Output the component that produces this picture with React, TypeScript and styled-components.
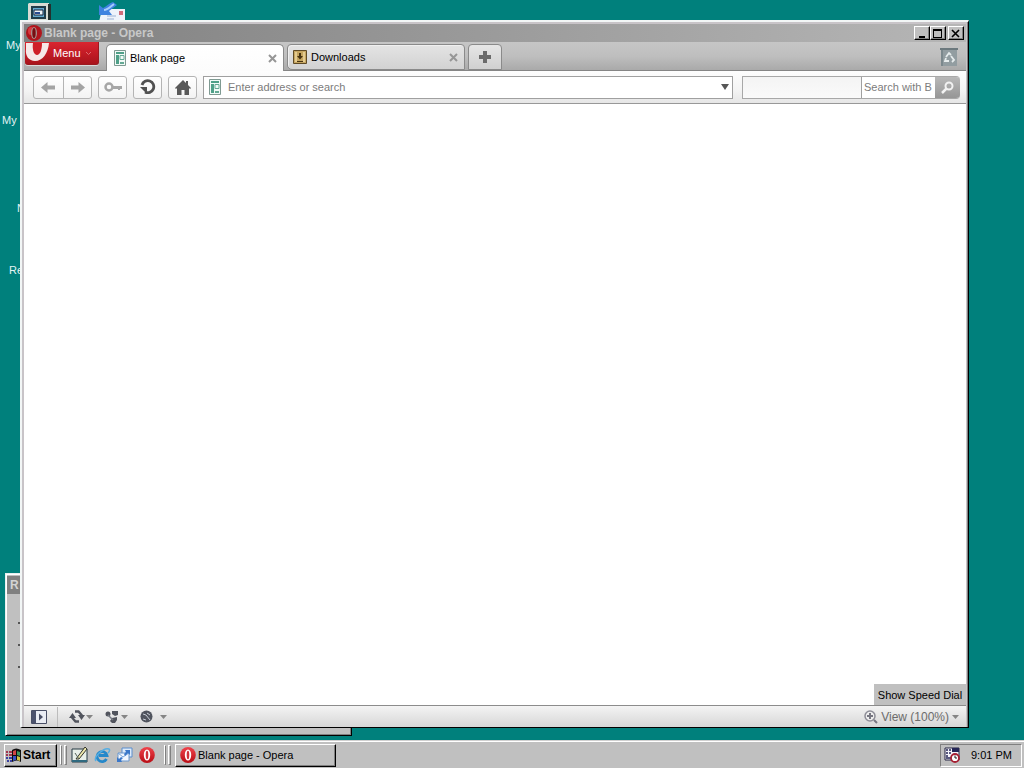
import React from "react";
import styled, { createGlobalStyle, css } from "styled-components";

const GlobalStyle = createGlobalStyle`
  *, *::before, *::after { box-sizing: border-box; }
  body { margin: 0; }
  body, button, input { font-family: "Liberation Sans", Arial, sans-serif; font-size: 11px; line-height: 14px; }
  button { padding: 0; margin: 0; color: #000; }
  svg { display: block; flex: none; }
`;

const raised = css`
  background: #c0c0c0;
  border: 1px solid;
  border-color: #fff #000 #000 #fff;
  box-shadow: inset -1px -1px 0 #808080;
`;

const Screen = styled.div`
  height: 100vh;
  min-height: 400px;
  display: flex;
  flex-direction: column;
  background: #00807c;
  overflow: hidden;
`;

const Desktop = styled.main`
  position: relative;
  flex: 1;
  min-height: 0;
`;

const DesktopItem = styled.div<{ $x: number; $y: number }>`
  position: absolute;
  left: ${(p) => p.$x}px;
  top: ${(p) => p.$y}px;
  color: #e4f4f4;
  white-space: nowrap;
`;

const BackWindow = styled.section`
  position: absolute;
  left: 5px;
  bottom: 4px;
  width: 347px;
  height: 163px;
  padding: 2px 1px;
  background: #c0c0c0;
  border: 1px solid;
  border-color: #e8f0f0 #000 #000 #e8f0f0;
  box-shadow: inset 1px 1px 0 #fff, inset -1px -1px 0 #808080;
`;

const BackTitle = styled.div`
  height: 18px;
  padding: 2px 3px;
  background: #808080;
  color: #d4d4d4;
  font-size: 12px;
  font-weight: bold;
`;

const BackList = styled.div`
  display: flex;
  flex-direction: column;
  gap: 20px;
  padding: 28px 0 0 11px;
`;

const Speck = styled.span`
  width: 3px;
  height: 2px;
  background: #555;
`;

const BrowserWindow = styled.section`
  position: absolute;
  left: 20px;
  right: 55px;
  top: 20px;
  bottom: 12px;
  display: flex;
  flex-direction: column;
  background: #c8c4c8;
  border: solid;
  border-width: 2px 1px 1px 2px;
  border-color: #f2f6f6 #000 #000 #f2f6f6;
  box-shadow: inset -1px 0 0 #808080;
  padding: 2px 2px 0 2px;
`;

const TitleBar = styled.header`
  display: flex;
  align-items: center;
  height: 18px;
  gap: 2px;
  padding: 0 2px;
  background: linear-gradient(90deg, #808080, #b6b6b6);
`;

const Title = styled.h1`
  flex: 1;
  margin: 0;
  font-size: 12px;
  line-height: 16px;
  color: #c8c8c8;
`;

const CaptionButtons = styled.div`
  display: flex;
`;

const CaptionButton = styled.button<{ $apart?: boolean }>`
  ${raised}
  display: flex;
  align-items: center;
  justify-content: center;
  width: 16px;
  height: 14px;
  margin-left: ${(p) => (p.$apart ? 2 : 0)}px;
`;

const TabBar = styled.nav`
  display: flex;
  height: 29px;
  padding-right: 8px;
  background: linear-gradient(#c6c6c6 0, #bebebe 50%, #a8a8a8 100%);
  box-shadow: inset 0 -1px 0 #858585;
`;

const MenuButton = styled.button`
  display: flex;
  align-items: center;
  gap: 4px;
  width: 74px;
  height: 23px;
  margin-left: 1px;
  border: 1px solid #9c1a20;
  border-top-width: 0;
  border-left-width: 0;
  border-radius: 0 0 3px 3px;
  background: linear-gradient(#d92630, #c51c26 45%, #a9141c);
  box-shadow: 0 1px 0 #dadada;
  color: #fff;
`;

const Tab = styled.div<{ $active?: boolean }>`
  display: flex;
  align-items: center;
  width: 178px;
  height: ${(p) => (p.$active ? 27 : 26)}px;
  margin: 2px 3px 0 0;
  padding: ${(p) => (p.$active ? "0 6px 0 7px" : "0 6px 0 5px")};
  border: 1px solid #8a8a8a;
  border-bottom-width: ${(p) => (p.$active ? 0 : 1)}px;
  border-radius: ${(p) => (p.$active ? "5px 5px 0 0" : "4px 4px 0 5px")};
  background: ${(p) => (p.$active ? "linear-gradient(#fff, #fcfcfc)" : "linear-gradient(#e4e4e4, #d2d2d2)")};
  box-shadow: ${(p) => (p.$active ? "none" : "inset 1px 1px 0 #f0f0f0")};
`;

const FirstTabSpace = styled.div`
  width: 7px;
`;

const TabLabel = styled.button`
  display: flex;
  align-items: center;
  gap: 4px;
  flex: 1;
  height: 100%;
  border: 0;
  background: none;
`;

const PlainButton = styled.button`
  display: flex;
  align-items: center;
  justify-content: center;
  border: 0;
  background: none;
`;

const NewTab = styled.button`
  display: flex;
  align-items: center;
  justify-content: center;
  width: 34px;
  height: 26px;
  margin-top: 2px;
  border: 1px solid #8a8a8a;
  border-radius: 4px 4px 0 0;
  background: linear-gradient(#e6e6e6, #d0d0d0);
`;

const Spacer = styled.div`
  flex: 1;
`;

const Toolbar = styled.div`
  display: flex;
  align-items: center;
  gap: 6px;
  height: 33px;
  padding: 0 6px 0 9px;
  background: linear-gradient(#fdfdfd, #f4f4f4 60%, #e6e6e6);
  border-bottom: 1px solid #989898;
`;

const ButtonGroup = styled.div`
  display: flex;
  border: 1px solid #b4b4b4;
  border-radius: 3px;
  background: linear-gradient(#fff, #f3f3f3);
`;

const ToolButton = styled.button<{ $divided?: boolean }>`
  display: flex;
  align-items: center;
  justify-content: center;
  width: ${(p) => (p.$divided ? 30 : 27)}px;
  height: 21px;
  border: 0;
  border-right: ${(p) => (p.$divided ? "1px solid #b4b4b4" : "0")};
  background: none;
`;

const AddressBox = styled.div`
  display: flex;
  align-items: center;
  flex: 1;
  height: 23px;
  gap: 7px;
  padding: 0 3px 0 5px;
  border: 1px solid #a0a0a0;
  background: #fff;
`;

const TextInput = styled.input`
  flex: 1;
  min-width: 0;
  width: 100%;
  border: 0;
  padding: 0;
  outline: 0;
  background: transparent;
  &::placeholder { color: #7c7c7c; opacity: 1; }
`;

const SearchBox = styled.div`
  display: flex;
  width: 218px;
  height: 23px;
  margin-left: 3px;
  border: 1px solid #a8a8a8;
  border-right: 0;
  border-radius: 0 4px 4px 0;
  overflow: hidden;
  background: linear-gradient(#f4f4f4, #fafafa);
`;

const SearchProgress = styled.div`
  flex: 1;
  border-right: 1px solid #a0a0a0;
`;

const SearchField = styled.label`
  display: flex;
  width: 73px;
  padding-left: 2px;
  background: #fff;
`;

const SearchButton = styled.button`
  display: flex;
  align-items: center;
  justify-content: center;
  width: 25px;
  border: 0;
  background: linear-gradient(#b8b8b8, #969696);
`;

const PageArea = styled.div`
  position: relative;
  flex: 1;
  min-height: 0;
  background: #fff;
`;

const SpeedDialButton = styled.button`
  position: absolute;
  right: 0;
  bottom: 0;
  width: 92px;
  height: 21px;
  border: 0;
  background: #c0c0c0;
`;

const StatusBar = styled.footer`
  display: flex;
  align-items: center;
  height: 22px;
  padding: 0 7px;
  border-top: 1px solid #8c8c8c;
  background: linear-gradient(#f4f4f4, #d6d6d6);
`;

const PanelToggle = styled(PlainButton)`
  height: 20px;
  width: 27px;
  padding-right: 11px;
  border-right: 1px solid #bcbcbc;
`;

const StatusTools = styled.div`
  display: flex;
  gap: 12px;
  padding-left: 11px;
`;

const StatusButton = styled(PlainButton)<{ $gap?: number }>`
  gap: ${(p) => p.$gap ?? 1}px;
  color: #6c6c6c;
`;

const ViewButton = styled(StatusButton)`
  gap: 3px;
  font-size: 12px;
`;

const Taskbar = styled.footer`
  display: flex;
  align-items: center;
  flex: none;
  height: 28px;
  padding: 2px 2px 0 4px;
  background: #c0c0c0;
  box-shadow: inset 0 1px 0 #d0d0d0, inset 0 2px 0 #fff;
`;

const StartButton = styled.button`
  ${raised}
  display: flex;
  align-items: center;
  gap: 1px;
  width: 53px;
  height: 23px;
  padding-left: 1px;
  font-size: 12px;
  font-weight: bold;
`;

const Grip = styled.div`
  display: flex;
  gap: 2px;
  margin: 0 4px 0 3px;
  &::before, &::after {
    content: "";
    width: 3px;
    height: 20px;
    border: 1px solid;
    border-color: #fff #808080 #808080 #fff;
  }
  &::before { width: 2px; }
`;

const QuickLaunch = styled.div`
  display: flex;
  gap: 6px;
  padding: 0 6px 0 0;
`;

const TaskButton = styled.button`
  ${raised}
  display: flex;
  align-items: center;
  gap: 2px;
  width: 161px;
  height: 23px;
  padding-left: 4px;
`;

const Tray = styled.div`
  display: flex;
  align-items: center;
  gap: 11px;
  width: 82px;
  height: 23px;
  padding-left: 3px;
  border: 1px solid;
  border-color: #808080 #fff #fff #808080;
`;

const OperaIcon = ({ id, size = 16 }: { id: string; size?: number }) => (
  <svg width={size} height={size} viewBox="0 0 16 16" aria-hidden="true">
    <defs>
      <linearGradient id={id} x1="0" y1="0" x2="0" y2="1">
        <stop offset="0" stopColor="#f0444c" />
        <stop offset="1" stopColor="#b80c14" />
      </linearGradient>
    </defs>
    <ellipse cx="8" cy="8" rx="7.8" ry="8" fill={`url(#${id})`} />
    <ellipse cx="8" cy="8" rx="3.2" ry="5.6" fill="#fff" />
    <ellipse cx="8" cy="8" rx="1.3" ry="4.2" fill="#d0323a" />
  </svg>
);

const TitleOperaIcon = () => (
  <svg width="16" height="16" viewBox="0 0 16 16" aria-hidden="true">
    <ellipse cx="8" cy="8" rx="8" ry="8" fill="#b0141c" />
    <ellipse cx="5" cy="6" rx="3" ry="4" fill="#d83a40" />
    <ellipse cx="8" cy="8" rx="3" ry="6" fill="#a49490" />
    <ellipse cx="8" cy="8" rx="1.7" ry="5" fill="#780c10" />
  </svg>
);

const PageIcon = () => (
  <svg width="12" height="16" viewBox="0 0 12 16" aria-hidden="true">
    <path d="M.5.5h11v15H.5z" fill="#f2faf7" stroke="#7f9a92" />
    <path d="M2 2h8v2H2zM2 5h3v9H2z" fill="#4fa088" />
    <path d="M6 5.500h4v4H6z" fill="none" stroke="#64a994" />
    <path d="M6 12h4v2H6z" fill="#64a994" />
  </svg>
);

const DownloadIcon = () => (
  <svg width="14" height="14" viewBox="0 0 14 14" aria-hidden="true">
    <path d="M.5.5h13v13H.5z" fill="#c5a560" stroke="#5f4a26" />
    <path d="M2 2h2v10H2zM10 2h2v10h-2z" fill="#e4cb90" />
    <path d="M6 3h2v3h2L7 9.500 4 6h2zM4 11h6v1H4z" fill="#46320f" />
  </svg>
);

const CloseX = () => (
  <svg width="9" height="9" viewBox="0 0 9 9" aria-hidden="true">
    <path d="M1 1l7 7M8 1L1 8" stroke="#969696" strokeWidth="2" />
  </svg>
);

const Caret = ({ color = "#858585" }: { color?: string }) => (
  <svg width="7" height="4" viewBox="0 0 7 4" aria-hidden="true">
    <path d="M0 0h7L3.5 4z" fill={color} />
  </svg>
);

const Arrow = ({ flip }: { flip?: boolean }) => (
  <svg width="15" height="13" viewBox="0 0 15 13" aria-hidden="true">
    <path d={flip ? "M15 6.500L8.500 1v3.500H1v4h7.500V12z" : "M0 6.500L6.500 1v3.500H14v4H6.500V12z"} fill="#a4a4a4" />
  </svg>
);

export default function App() {
  return (
    <Screen>
      <GlobalStyle />
      <Desktop>
        <DesktopItem $x={28} $y={3}>
          <svg width="23" height="18" viewBox="0 0 23 18" aria-hidden="true">
            <path d="M1 0h20v18H0V1z" fill="#d8dcd4" />
            <path d="M20 1h3v17h-3z" fill="#24302e" />
            <path d="M3 3h15v13H3z" fill="#213b48" />
            <path d="M5 5h11v9H5z" fill="#63a8cd" />
            <path d="M6 7h9v5H6z" fill="#eef4f6" stroke="#18233c" />
            <path d="M7 9h5v2H7z" fill="#294b91" />
          </svg>
        </DesktopItem>
        <DesktopItem $x={98} $y={2}>
          <svg width="28" height="20" viewBox="0 0 28 20" aria-hidden="true">
            <path d="M4 7h23v13H1z" fill="#eef3fb" />
            <path d="M21 9h4v4h-4z" fill="#cf6d7b" />
            <path d="M9 14h9M9 17h7" stroke="#9bb2d3" />
            <path d="M15 0l4 3-8 6 3 4H1V3l4 3c3-1 6-5 10-6z" fill="#3e83e0" />
            <path d="M6 8c4 0 6-3 10-6" stroke="#a5ccfb" strokeWidth="2" fill="none" />
          </svg>
        </DesktopItem>
        <DesktopItem $x={6} $y={38}>My</DesktopItem>
        <DesktopItem $x={2} $y={113}>My</DesktopItem>
        <DesktopItem $x={17} $y={201}>N</DesktopItem>
        <DesktopItem $x={9} $y={263}>Re</DesktopItem>

        <BackWindow>
          <BackTitle>R</BackTitle>
          <BackList>
            <Speck />
            <Speck />
            <Speck />
          </BackList>
        </BackWindow>

        <BrowserWindow>
          <TitleBar>
            <TitleOperaIcon />
            <Title>Blank page - Opera</Title>
            <CaptionButtons>
              <CaptionButton aria-label="Minimize">
                <svg width="10" height="9" viewBox="0 0 10 9"><path d="M2 7h6v2H2z" /></svg>
              </CaptionButton>
              <CaptionButton aria-label="Maximize">
                <svg width="10" height="9" viewBox="0 0 10 9"><path d="M0 0h9v9H0zM1 2v6h7V2z" fillRule="evenodd" /></svg>
              </CaptionButton>
              <CaptionButton aria-label="Close" $apart>
                <svg width="10" height="9" viewBox="0 0 10 9"><path d="M1 1l7 7M8 1L1 8" stroke="#000" strokeWidth="1.600" /></svg>
              </CaptionButton>
            </CaptionButtons>
          </TitleBar>

          <TabBar>
            <MenuButton>
              <svg width="24" height="20" viewBox="0 0 24 20" aria-hidden="true">
                <path d="M1 0h23C23 10 18 18 10 18 4 18 0 13 1 6z" fill="#f6e8e8" />
                <path d="M8 0h9c0 7-2 12-5 12S7 7 8 0z" fill="#cf1f29" />
              </svg>
              Menu
              <svg width="7" height="5" viewBox="0 0 7 5" aria-hidden="true">
                <path d="M1 1l2.500 2.500L6 1" stroke="#dc6b70" fill="none" />
              </svg>
            </MenuButton>
            <FirstTabSpace />
            <Tab $active>
              <TabLabel><PageIcon />Blank page</TabLabel>
              <PlainButton aria-label="Close Blank page"><CloseX /></PlainButton>
            </Tab>
            <Tab>
              <TabLabel><DownloadIcon />Downloads</TabLabel>
              <PlainButton aria-label="Close Downloads"><CloseX /></PlainButton>
            </Tab>
            <NewTab aria-label="New tab">
              <svg width="12" height="12" viewBox="0 0 12 12"><path d="M4 0h4v4h4v4H8v4H4V8H0V4h4z" fill="#6b6b6b" /></svg>
            </NewTab>
            <Spacer />
            <PlainButton aria-label="Closed tabs">
              <svg width="18" height="19" viewBox="0 0 18 19">
                <path d="M1 2h16v17H1z" fill="#929da1" />
                <path d="M0 1h18v2H0z" fill="#6c797e" />
                <path d="M1 3h2v16H1z" fill="#7b888d" />
                <path d="M6 10l3-4 2 2M11 9l3 4-2 2M9 14H5l1-3" stroke="#e6eced" strokeWidth="1.800" fill="none" />
              </svg>
            </PlainButton>
          </TabBar>

          <Toolbar>
            <ButtonGroup>
              <ToolButton $divided aria-label="Back"><Arrow /></ToolButton>
              <ToolButton aria-label="Forward"><Arrow flip /></ToolButton>
            </ButtonGroup>
            <ButtonGroup>
              <ToolButton aria-label="Wand">
                <svg width="18" height="10" viewBox="0 0 18 10">
                  <circle cx="5" cy="5" r="3.500" fill="none" stroke="#a6a6a6" strokeWidth="2.500" />
                  <path d="M9 4h9v3h-2v1h-2V7H9z" fill="#a6a6a6" />
                </svg>
              </ToolButton>
            </ButtonGroup>
            <ButtonGroup>
              <ToolButton aria-label="Reload">
                <svg width="17" height="16" viewBox="0 0 17 16">
                  <path d="M3 6a6 6 0 1 1 3 7" fill="none" stroke="#515151" strokeWidth="2.800" />
                  <path d="M1 8h7v7z" fill="#515151" />
                </svg>
              </ToolButton>
            </ButtonGroup>
            <ButtonGroup>
              <ToolButton aria-label="Home">
                <svg width="16" height="15" viewBox="0 0 16 15">
                  <path d="M8 0l3 3V1h2v4l3 3-1 1-1-1v7H9.500v-5h-3v5H2V8L1 9 0 8z" fill="#595959" />
                </svg>
              </ToolButton>
            </ButtonGroup>
            <AddressBox>
              <PageIcon />
              <TextInput aria-label="Address" placeholder="Enter address or search" />
              <PlainButton aria-label="Address history">
                <svg width="8" height="6" viewBox="0 0 8 6"><path d="M0 0h8L4 6z" fill="#565656" /></svg>
              </PlainButton>
            </AddressBox>
            <SearchBox>
              <SearchProgress />
              <SearchField><TextInput aria-label="Search the web" placeholder="Search with B" /></SearchField>
              <SearchButton aria-label="Search">
                <svg width="13" height="13" viewBox="0 0 13 13">
                  <circle cx="8" cy="5" r="3.500" fill="none" stroke="#f2f2f2" strokeWidth="2" />
                  <path d="M5.500 7.500L1 12" stroke="#f2f2f2" strokeWidth="2.500" />
                </svg>
              </SearchButton>
            </SearchBox>
          </Toolbar>

          <PageArea>
            <SpeedDialButton>Show Speed Dial</SpeedDialButton>
          </PageArea>

          <StatusBar>
            <PanelToggle aria-label="Panels">
              <svg width="16" height="14" viewBox="0 0 16 14">
                <path d="M.5.5h15v13H.5z" fill="#e9ecf3" stroke="#484e65" />
                <path d="M1 1h4v12H1z" fill="#4b526d" />
                <path d="M8 3.500l4 3.500-4 3.500z" fill="#484e65" />
              </svg>
            </PanelToggle>
            <StatusTools>
              <StatusButton aria-label="Synchronize">
                <svg width="16" height="13" viewBox="0 0 16 13">
                  <path d="M6 1.500h3.500l3.500 4M10 11.500H6.500L3 7.500" stroke="#51545d" strokeWidth="2.400" fill="none" />
                  <path d="M0 8l3.500-5L7 8zM9 5h7l-3.500 5z" fill="#51545d" />
                </svg>
                <Caret />
              </StatusButton>
              <StatusButton aria-label="Unite" $gap={2}>
                <svg width="14" height="13" viewBox="0 0 14 13">
                  <circle cx="3" cy="4" r="2.500" fill="#51545d" />
                  <path d="M7 1h6v4l-3 1-3-2zM7 8l5-1v3l-2 3H7l-2-2z" fill="#51545d" />
                  <path d="M3 5l5 5" stroke="#777b85" strokeWidth="1.500" fill="none" />
                </svg>
                <Caret />
              </StatusButton>
              <StatusButton aria-label="Turbo" $gap={7}>
                <svg width="13" height="13" viewBox="0 0 13 13">
                  <circle cx="6.500" cy="6.500" r="6" fill="#50545e" />
                  <path d="M3 4l3 1 4 5M3 9l3 1M7 3l3 2" stroke="#c6cbd4" fill="none" />
                </svg>
                <Caret />
              </StatusButton>
            </StatusTools>
            <Spacer />
            <ViewButton>
              <svg width="14" height="14" viewBox="0 0 14 14" aria-hidden="true">
                <circle cx="6" cy="6" r="5" fill="#eee" stroke="#8e8e98" strokeWidth="1.500" />
                <path d="M3 6h6M6 3v6M10 10l3 3" stroke="#777782" strokeWidth="2" />
              </svg>
              View (100%)
              <Caret />
            </ViewButton>
          </StatusBar>
        </BrowserWindow>
      </Desktop>

      <Taskbar>
        <StartButton>
          <svg width="16" height="15" viewBox="0 0 16 15" aria-hidden="true">
            <path d="M6 2q4-3 9 0v12q-4-3-9 0z" fill="#101010" />
            <path d="M7 3l3-1v5H7z" fill="#d24545" />
            <path d="M11 3l3 1v4l-3-1z" fill="#3d9660" />
            <path d="M7 8h3v4l-3 1z" fill="#3851c4" />
            <path d="M11 8l3 1v4l-3-1z" fill="#d1c246" />
            <path d="M0 4h2M3 4h3M0 7h2M3 7h3" stroke="#a33750" strokeWidth="2" />
            <path d="M0 10h2M3 10h3M1 13h2M4 13h2" stroke="#3840a2" strokeWidth="2" />
          </svg>
          Start
        </StartButton>
        <Grip />
        <QuickLaunch>
          <PlainButton aria-label="Show desktop">
            <svg width="17" height="16" viewBox="0 0 17 16">
              <path d="M1 2h15v13H1z" fill="#e8efe9" stroke="#273b45" />
              <path d="M1 13h15v2H1z" fill="#306a80" />
              <path d="M5 12L14 0l2 2L8 12z" fill="#eee9ad" stroke="#34352e" />
              <path d="M4 6l4 6" stroke="#54635a" />
            </svg>
          </PlainButton>
          <PlainButton aria-label="Internet Explorer">
            <svg width="17" height="16" viewBox="0 0 17 16">
              <path d="M12.500 12A5 5 0 1 1 13 8.500H5" fill="none" stroke="#2588ca" strokeWidth="2.800" />
              <path d="M2 14C-1 10 10 0 15 2c1 1 0 3-1 4" fill="none" stroke="#55aee3" strokeWidth="1.500" />
            </svg>
          </PlainButton>
          <PlainButton aria-label="Outlook Express">
            <svg width="16" height="16" viewBox="0 0 16 16">
              <path d="M5 1h10v9H5z" fill="#dceafa" stroke="#5b8dcc" />
              <path d="M1 6h11v8H1z" fill="#f2f7ff" stroke="#6c99ce" />
              <path d="M1 6l5 4 6-4" fill="none" stroke="#7aa5d7" />
              <path d="M8 3h5v5l-2-2-3 3-1-2 2-2zM5 15H0v-5l2 2 2-2 2 1-2 2z" fill="#3b78c9" />
            </svg>
          </PlainButton>
          <PlainButton aria-label="Opera"><OperaIcon id="quick-opera" /></PlainButton>
        </QuickLaunch>
        <Grip />
        <TaskButton><OperaIcon id="task-opera" />Blank page - Opera</TaskButton>
        <Spacer />
        <Tray>
          <svg width="16" height="16" viewBox="0 0 16 16" aria-hidden="true">
            <path d="M1 1h14v12H1z" fill="#f4f4fa" stroke="#242442" />
            <path d="M8 1h7v4H8z" fill="#252657" />
            <path d="M2 3h2M5 3h2M2 6h2M5 6h2M2 9h2M2 11h5" stroke="#252657" strokeWidth="1.500" />
            <circle cx="11" cy="11" r="4" fill="#fff" stroke="#a51f32" strokeWidth="1.800" />
            <path d="M11 8.500V11h2" stroke="#181818" fill="none" />
          </svg>
          9:01 PM
        </Tray>
      </Taskbar>
    </Screen>
  );
}
